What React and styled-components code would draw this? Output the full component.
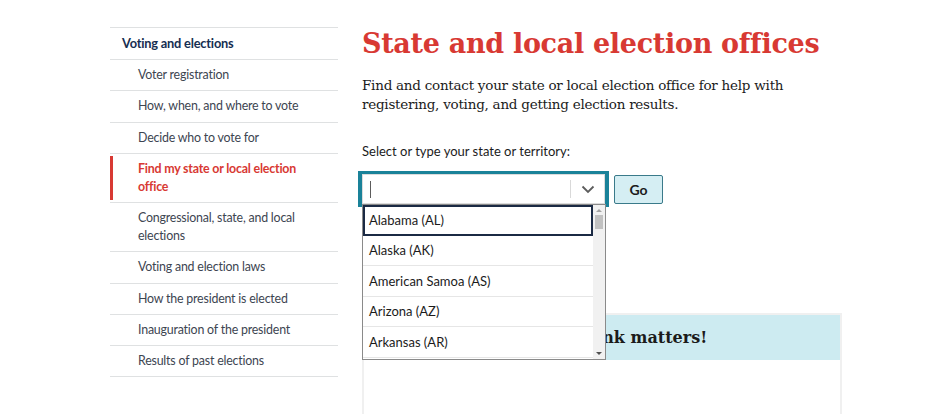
import React, {useState} from 'react';
import styled, {createGlobalStyle} from 'styled-components';

const GlobalStyle = createGlobalStyle`
    body{
        margin : 0;
        background : #ffffff;
        font-family : "Lato", "Noto Sans", sans-serif;
        color : #1b1b1b;
    }
`;

const Page = styled.div`
    display : flex;
    flex-direction : row;
    align-items : flex-start;
    gap : 24px;
    padding : 27px 0px 0px 110px;
    height : 414px;
    box-sizing : border-box;
    overflow : hidden;
`;

const SideNav = styled.ul`
    width : 228px;
    margin : 0;
    padding : 0;
    list-style : none;
    border-top : 1px solid #dfe1e2;
    flex-shrink : 0;
`;

const NavItem = styled.li`
    position : relative;
    border-bottom : 1px solid #dfe1e2;
    padding : ${p => p.top ? '6px 12px 7px 12px' : '6px 20px 6.25px 28px'};
    font-size : ${p => p.top ? '12.8px' : '12.4px'};
    letter-spacing : -0.2px;
    line-height : 18px;
    font-weight : ${p => (p.top || p.current) ? 700 : 400};
    color : ${p => p.current ? '#d83933' : (p.top ? '#162e51' : '#3d4551')};
    &::before{
        content : '';
        display : ${p => p.current ? 'block' : 'none'};
        position : absolute;
        left : 0;
        top : 2px;
        bottom : 2px;
        width : 3px;
        background : #d83933;
    }
`;

const Main = styled.main`
    width : 478px;
    display : flex;
    flex-direction : column;
`;

const Title = styled.h1`
    margin : 0;
    font-family : "DejaVu Serif", "Liberation Serif", serif;
    font-size : 27px;
    line-height : 34px;
    font-weight : 700;
    color : #d83933;
    white-space : nowrap;
    letter-spacing : -0.3px;
`;

const Intro = styled.p`
    margin : 15px 0px 0px 0px;
    font-family : "DejaVu Serif", "Liberation Serif", serif;
    font-size : 13.5px;
    letter-spacing : -0.25px;
    line-height : 19px;
    color : #1b1b1b;
    width : 440px;
`;

const Label = styled.label`
    display : block;
    margin-top : 28px;
    font-size : 13px;
    line-height : 18px;
    color : #1b1b1b;
`;

const FieldRow = styled.div`
    display : flex;
    flex-direction : row;
    align-items : center;
    gap : 5px;
    margin-top : 11px;
    margin-left : -4px;
`;

const ComboWrap = styled.div`
    position : relative;
    width : 243px;
    border-style : solid;
    border-color : #1a8299;
    border-width : 3px 4px 3px 4px;
`;

const ComboInput = styled.div`
    display : flex;
    flex-direction : row;
    align-items : center;
    height : 30px;
    background : #ffffff;
    border : 1px solid #dcdcdc;
    box-sizing : border-box;
`;

const Caret = styled.span`
    width : 1px;
    height : 17px;
    background : #5c5c5c;
    margin-left : 7px;
`;

const Spacer = styled.span`
    flex : 1;
`;

const Divider = styled.span`
    width : 1px;
    height : 18px;
    background : #d9d9d9;
`;

const ChevronBtn = styled.span`
    width : 33px;
    display : flex;
    align-items : center;
    justify-content : center;
`;

const GoButton = styled.button`
    width : 49px;
    height : 29px;
    background : #d5eef3;
    border : 1px solid #3a7a8a;
    border-radius : 2px;
    font-family : "Lato", "Noto Sans", sans-serif;
    font-weight : 700;
    font-size : 14px;
    color : #1b1b1b;
    padding : 0;
`;

const ListBox = styled.ul`
    position : absolute;
    left : 0;
    top : 30px;
    width : 244px;
    height : 156px;
    margin : 0;
    padding : 0;
    list-style : none;
    background : #ffffff;
    border : 1px solid #8a8a8a;
    box-sizing : border-box;
    overflow : hidden;
    z-index : 5;
`;

const Option = styled.li`
    height : 30.5px;
    box-sizing : border-box;
    margin-right : 12px;
    padding : 0px 6px;
    display : flex;
    align-items : center;
    font-size : 13px;
    color : #1b1b1b;
    border-bottom : 1px solid #e6e6e6;
    outline : ${p => p.focused ? '2px solid #1b2a44' : 'none'};
    outline-offset : -2px;
`;

const ScrollTrack = styled.div`
    position : absolute;
    right : 0;
    top : 0;
    bottom : 0;
    width : 12px;
    background : #f1f1f1;
    display : flex;
    flex-direction : column;
    align-items : center;
`;

const ScrollArrow = styled.span`
    width : 0;
    height : 0;
    border-left : 3px solid transparent;
    border-right : 3px solid transparent;
    ${p => p.down
        ? 'border-top : 3px solid #505050; margin-top : auto; margin-bottom : 4px;'
        : 'border-bottom : 3px solid #a3a3a3; margin-top : 4px;'}
`;

const ScrollThumb = styled.span`
    width : 8px;
    height : 14px;
    background : #c1c1c1;
    margin-top : 3px;
`;

const Feedback = styled.section`
    margin-top : 106px;
    width : 480px;
    box-sizing : border-box;
    border : 2px solid #f0f0f0;
    height : 120px;
`;

const FeedbackHead = styled.div`
    background : #cdebf1;
    height : 45px;
    display : flex;
    align-items : center;
    padding-left : 63px;
    font-family : "DejaVu Serif", "Liberation Serif", serif;
    font-weight : 700;
    font-size : 16px;
    color : #1b1b1b;
`;

const navItems = [
    {label : 'Voter registration'},
    {label : 'How, when, and where to vote'},
    {label : 'Decide who to vote for'},
    {label : 'Find my state or local election office', current : true},
    {label : 'Congressional, state, and local elections'},
    {label : 'Voting and election laws'},
    {label : 'How the president is elected'},
    {label : 'Inauguration of the president'},
    {label : 'Results of past elections'},
];

const states = [
    'Alabama (AL)',
    'Alaska (AK)',
    'American Samoa (AS)',
    'Arizona (AZ)',
    'Arkansas (AR)',
    'California (CA)',
];

function App(){
    const [value] = useState("");

    return(
        <>
            <GlobalStyle/>
            <Page>
                <SideNav>
                    <NavItem top>Voting and elections</NavItem>
                    {navItems.map(item =>
                        <NavItem key={item.label} current={item.current}>{item.label}</NavItem>
                    )}
                </SideNav>
                <Main>
                    <Title>State and local election offices</Title>
                    <Intro>Find and contact your state or local election office for help with registering, voting, and getting election results.</Intro>
                    <Label>Select or type your state or territory:</Label>
                    <FieldRow>
                        <ComboWrap>
                            <ComboInput>
                                <Caret/>
                                <Spacer>{value}</Spacer>
                                <Divider/>
                                <ChevronBtn>
                                    <svg width="14" height="9" viewBox="0 0 14 9" fill="none">
                                        <path d="M1.5 1.5 L7 7 L12.5 1.5" stroke="#5c5c5c" strokeWidth="1.8"/>
                                    </svg>
                                </ChevronBtn>
                            </ComboInput>
                            <ListBox>
                                {states.map((s, i) =>
                                    <Option key={s} focused={i === 0}>{s}</Option>
                                )}
                                <ScrollTrack>
                                    <ScrollArrow/>
                                    <ScrollThumb/>
                                    <ScrollArrow down/>
                                </ScrollTrack>
                            </ListBox>
                        </ComboWrap>
                        <GoButton>Go</GoButton>
                    </FieldRow>
                    <Feedback>
                        <FeedbackHead>Tell us what you think matters!</FeedbackHead>
                    </Feedback>
                </Main>
            </Page>
        </>
    )
}

export default App;
